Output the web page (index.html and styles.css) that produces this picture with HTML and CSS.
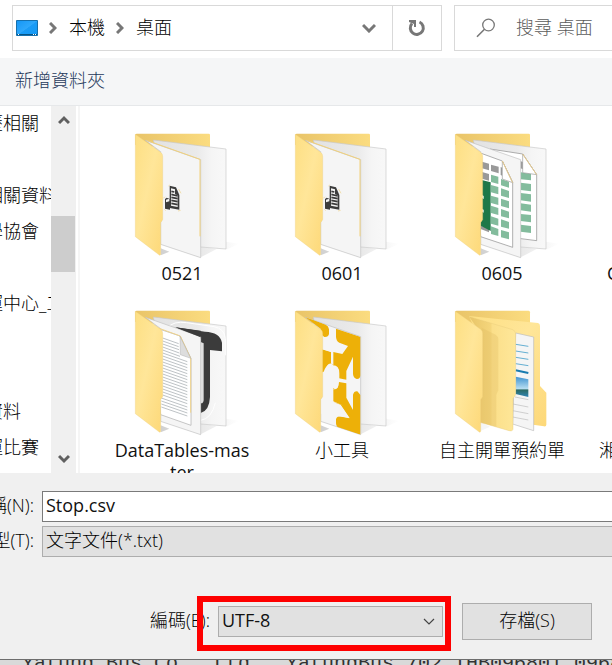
FILE: index.html
```
<!DOCTYPE html>
<html lang="zh-Hant">
<head>
<meta charset="utf-8">
<meta name="viewport" content="width=device-width, initial-scale=1">
<title>另存新檔</title>
<link rel="stylesheet" href="styles.css">
</head>
<body>
<svg class="defs" aria-hidden="true">
  <defs>
    <linearGradient id="back" x1="0" y1="0" x2="1" y2="0"><stop offset="0" stop-color="#e9c468"/><stop offset="1" stop-color="#fbdc80"/></linearGradient>
    <linearGradient id="flap" x1="0" y1="0" x2="1" y2="1"><stop offset="0" stop-color="#fddf83"/><stop offset=".45" stop-color="#ffe699"/><stop offset="1" stop-color="#fdd878"/></linearGradient>
    <linearGradient id="inner" x1="0" y1="0" x2="1" y2="0"><stop offset="0" stop-color="#e8c568"/><stop offset=".45" stop-color="#f4d57b"/><stop offset=".5" stop-color="#fbdf8a"/><stop offset="1" stop-color="#fee799"/></linearGradient>
    <linearGradient id="sheet" x1="0" y1="0" x2="1" y2="0"><stop offset="0" stop-color="#e2e2e2"/><stop offset=".6" stop-color="#eaeaea"/><stop offset=".8" stop-color="#f5f5f5"/><stop offset="1" stop-color="#f8f8f8"/></linearGradient>
    <linearGradient id="shade" x1="0" y1="0" x2="1" y2="0"><stop offset="0" stop-color="#aaa"/><stop offset="1" stop-color="#fff"/></linearGradient>
    <linearGradient id="sky" x1="0" y1="0" x2="0" y2="1"><stop offset="0" stop-color="#3f93d0"/><stop offset=".6" stop-color="#b9dff2"/><stop offset=".65" stop-color="#2b6a63"/><stop offset="1" stop-color="#3185b5"/></linearGradient>
    <linearGradient id="screen" x1="0" y1="0" x2="1" y2="1"><stop offset="0" stop-color="#1496f5"/><stop offset=".5" stop-color="#2fa8fb"/><stop offset=".52" stop-color="#1b9cf6"/><stop offset="1" stop-color="#1499f5"/></linearGradient>
    <clipPath id="front-page"><path d="M76 46 242 104V398L122 358V80Z"/></clipPath>
    <g id="folder-back">
      <path fill="url(#shade)" opacity=".55" d="M318 350 358 356 318 374ZM242 365 290 372 242 397ZM122 370 148 380 122 391Z"/>
      <path fill="url(#back)" d="M46 29Q46 26 50 26H266Q270 26 270 30V80L46 60Z"/>
      <path fill="url(#sheet)" stroke="#c9c9c9" stroke-width="2" d="M100 45 318 72V372L242 366 160 350Z"/>
    </g>
    <path id="sheet-front" fill="#f5f5f5" stroke="#bfbfbf" stroke-width="2" d="M76 46 242 104V398L122 358V80Z"/>
    <path id="folder-flap" fill="url(#flap)" stroke="#eacb78" d="M46 28 122 82Q128 87 128 94V284L122 293V386Q122 394 115 388L46 335Z"/>
    <g id="folder-doc">
      <use href="#folder-back"/><use href="#sheet-front"/>
      <path fill="none" stroke="#f2d17a" stroke-width="3" d="M80 46 240 103V334"/>
      <path fill="#3c3c3c" d="M149 182 168 187 178 210V254L149 249Z"/>
      <path fill="#f5f5f5" d="M153 190 165 193V208L173 211V246L153 242Z"/>
      <path stroke="#3c3c3c" stroke-width="5" d="M154 199 163 201M154 208 173 213M154 217 173 221M154 226 173 230M154 235 173 239"/>
      <path fill="#3c3c3c" d="M135 222 140 218 150 222V254L135 251Z"/><path fill="#f5f5f5" d="M138 224 148 221V229L138 232Z"/>
      <path fill="none" stroke="#efd38d" stroke-width="2" d="M146 184 149 179M176 192 183 205M174 258 182 256M133 253 137 257M130 220 135 215"/>
      <use href="#folder-flap"/>
    </g>
  </defs>
</svg>
<div class="dialog">
  <header class="nav">
    <div class="address">
      <svg class="desktop" viewBox="0 0 22 16" aria-hidden="true"><path fill="url(#screen)" stroke="#1670ad" d="M.5.5h21v15H.5z"/><path fill="#075585" d="M1 14h20v1H1z"/><path fill="#fff" d="M2 14h1v1H2zM17 14h1v1h-1zM19 14h1v1h-1z"/></svg>
      <svg class="sep" viewBox="0 0 8 12" aria-hidden="true"><path d="m1 1 5 5-5 5"/></svg>
      <a class="crumb" href="#">本機</a>
      <svg class="sep" viewBox="0 0 8 12" aria-hidden="true"><path d="m1 1 5 5-5 5"/></svg>
      <a class="crumb" href="#">桌面</a>
      <button class="history" type="button" aria-label="先前的位置"><svg width="14" height="10" viewBox="0 0 14 10"><path fill="none" stroke="#777" stroke-width="3" d="m1 2 6 6 6-6"/></svg></button>
      <button class="refresh" type="button" aria-label="重新整理"><svg width="18" height="18" viewBox="0 0 18 18"><path fill="none" stroke="#777" stroke-width="3" d="M11.500 3A6.500 6.500 0 1 1 4 4.500"/><path fill="#777" d="M1 1h7v7H6V5L1 3z"/></svg></button>
    </div>
    <label class="search">
      <svg width="20" height="20" viewBox="0 0 20 20" aria-hidden="true"><circle cx="12.500" cy="7" r="5.800" fill="none" stroke="#777" stroke-width="1.300"/><path stroke="#777" stroke-width="1.500" d="m8.500 11.200-7.500 7.600"/></svg>
      <input type="search" placeholder="搜尋 桌面" aria-label="搜尋 桌面">
    </label>
  </header>
  <div class="toolbar"><button type="button">新增資料夾</button></div>
  <main class="browser">
    <ul class="tree">
      <li>歷相關</li><li></li><li>相關資料</li><li>學協會</li><li></li><li>運中心_工</li><li></li><li></li><li>資料</li><li>運比賽</li>
    </ul>
    <div class="scrollbar">
      <button type="button" aria-label="向上捲動"><svg width="12" height="10" viewBox="0 0 12 10"><path d="m1 8 5-5 5 5"/></svg></button>
      <div class="track"><div class="thumb"></div></div>
      <button type="button" aria-label="向下捲動"><svg width="12" height="10" viewBox="0 0 12 10"><path d="m1 2 5 5 5-5"/></svg></button>
    </div>
    <div class="files">
      <div class="file"><svg viewBox="6 9 360 402" aria-hidden="true"><use href="#folder-doc"/></svg><span class="latin">0521</span></div>
      <div class="file"><svg viewBox="6 9 360 402" aria-hidden="true"><use href="#folder-doc"/></svg><span class="latin">0601</span></div>
      <div class="file">
        <svg viewBox="6 9 360 402" aria-hidden="true">
          <use href="#folder-back"/>
          <path fill="#fff" stroke="#8a8a8a" stroke-width="2" d="M150 72 248 87 290 149V347L220 338"/>
          <path fill="#999" d="M241 108 250 112V133L241 130Z"/>
          <path fill="#83bc9d" d="M242 142 273 145V166L242 163ZM242 173 273 177V199L242 195ZM242 204 273 208V230L242 226ZM242 235 273 239V260L242 256ZM242 267 273 270V292L242 288ZM242 299 273 303V324L242 320Z"/>
          <path fill="#fff" stroke="#999" stroke-width="2" d="M248 87V143L290 149Z"/><path stroke="#e6ca8d" stroke-width="3" d="m248 87 42 62"/>
          <use href="#sheet-front"/>
          <path fill="#fff" stroke="#8a8a8a" stroke-width="2" d="M110 80 187 108 218 172V367L122 335Z"/>
          <path fill="#999" d="M126 110 147 116V136L126 130ZM153 119 176 125V145L153 138ZM182 126 187 128V152L182 150ZM126 141 147 147V167L126 161ZM122 302 147 310V322L122 312Z"/>
          <path fill="#1d7848" d="M122 164 152 172V318L122 302Z"/>
          <path fill="#fff" d="M126 210 131 213V222L126 219ZM126 252 131 254V263L126 260Z"/>
          <path fill="#83bc9d" d="M153 149 175 155V177L153 171ZM183 162 207 170V188L183 181ZM153 180 175 186V208L153 202ZM183 190 207 198V219L183 212ZM153 212 175 218V240L153 234ZM183 221 207 229V250L183 243ZM153 242 175 249V270L153 264ZM183 252 207 260V280L183 274ZM153 274 175 281V302L153 296ZM183 283 207 291V311L183 305ZM153 304 175 312V333L153 327ZM183 315 207 322V343L183 337Z"/>
          <path fill="#fff" stroke="#999" stroke-width="2" d="M187 108V162L218 173Z"/><path stroke="#e6ca8d" stroke-width="3" d="m187 108 31 65"/>
          <use href="#folder-flap"/>
        </svg><span class="latin">0605</span>
      </div>
      <div class="file file-edge file-next"><span class="latin">C</span></div>
      <div class="file">
        <svg viewBox="6 9 360 402" aria-hidden="true">
          <use href="#folder-back"/>
          <path fill="none" stroke="#fff" stroke-width="3" d="M142 78Q160 56 200 62L282 74Q314 80 316 110V160M242 355Q275 350 286 302"/>
          <path fill="#3b3b3b" d="M166 76 255 89Q300 91 306 122V148L270 144V285Q268 326 242 333V110Z"/>
          <use href="#sheet-front"/>
          <path fill="#dedede" d="M242 120 251 124V294Q250 305 242 304Z"/>
          <path fill="#3b3b3b" d="M166 76 242 86V106Z"/>
          <path fill="#fff" stroke="#aaa" stroke-width="2" d="M105 77 180 102 213 169V370L122 338Z"/>
          <path fill="none" stroke="#f0d38b" stroke-width="3" d="M115 78 181 102 212 169V332"/>
          <path stroke="#9ca3a8" stroke-width="2" d="m128 108 48 17M128 117l48 17M128 126l49 17M128 135l50 18M128 144l52 19M128 153l74 26M128 162l74 26M128 171l74 26M128 180l74 26M128 189l74 26M128 198l74 26M128 207l74 26M128 216l74 26M128 225l74 26M128 234l74 26M128 243l74 26M128 252l74 26M128 261l74 26M128 270l74 26M128 279l74 26M124 288l78 27M124 297l78 27M124 306l78 27M124 315l78 27"/>
          <path fill="#ddd" stroke="#999" d="M180 103 181 158 212 169Z"/>
          <use href="#folder-flap"/>
        </svg><span class="latin">DataTables-mas<br>ter</span>
      </div>
      <div class="file">
        <svg viewBox="6 9 360 402" aria-hidden="true">
          <use href="#folder-back"/><use href="#sheet-front"/>
          <g clip-path="url(#front-page)">
            <path fill="#edb008" d="M76 44 137 68Q146 72 147 82V96Q145 106 133 105L76 60ZM168 80 242 105V220Q240 232 230 231Q220 228 219 216V164L199 207V233L177 229V258Q173 267 159 261V299L180 307L219 324V278Q222 267 232 268L242 280V399L178 379Q167 374 168 360V352Q170 342 183 343L208 349L181 309L159 299V188L156 185Q140 180 136 208L122 212V140L153 149V184L160 190V150L187 156L204 132L178 122Q167 117 168 100Z"/>
            <path fill="#f5f5f5" d="M130 212Q139 181 159 190 178 190 178 214V250Q170 268 160 258V303L182 308 209 348 122 335V216Z"/>
            <path fill="#edb008" d="M160 262Q176 266 177 240L199 244V287L219 324V347L185 309 160 298Z"/>
            <path fill="none" stroke="#f5f5f5" stroke-width="4" d="M122 138 155 149V184M176 234 219 244"/>
          </g>
          <use href="#folder-flap"/>
        </svg><span>小工具</span>
      </div>
      <div class="file">
        <svg viewBox="6 9 360 402" aria-hidden="true">
          <path fill="url(#back)" d="M46 29Q46 26 50 26H266Q270 26 270 31V80L46 60Z"/>
          <path fill="url(#flap)" d="M87 42 294 63Q300 64 300 72V252L319 272V368Q319 374 312 373L220 360Z"/>
          <path fill="#f5f5f5" stroke="#bbb" stroke-width="2" d="M227 93 281 105V386L218 366Z"/>
          <path stroke="#65afd2" stroke-width="3" d="m227 127 38 6M227 147l38 6M227 166l38 6M227 185l38 6"/>
          <path stroke="#187bb0" stroke-width="6" d="m227 205 38 8"/>
          <path fill="url(#sky)" d="M227 224 265 232V285L227 276Z"/>
          <path stroke="#bbb" stroke-width="2" d="m225 285 40 8M219 306l46 9M218 326l47 9M218 345l47 9"/>
          <path fill="#f5f5f5" d="M120 360 150 374 120 388Z"/>
          <path fill="url(#inner)" stroke="#e4c675" d="M88 44 218 83Q227 87 227 96V278L219 290V382Q217 390 207 386L120 361V90Z"/>
          <path fill="#dfbb60" opacity=".3" d="M125 77 167 98Q175 103 175 112V265L169 278V374L122 362Z"/>
          <use href="#folder-flap"/>
        </svg><span>自主開單預約單</span>
      </div>
      <div class="file file-edge"><span>湘</span></div>
    </div>
  </main>
  <form class="form">
    <div class="field"><label for="name"><span>稱(N):</span></label><input class="latin" id="name" type="text" value="Stop.csv"></div>
    <div class="field"><label for="type"><span>型(T):</span></label><select id="type"><option>文字文件(*.txt)</option></select></div>
    <div class="actions">
      <label for="encoding">編碼(E):</label>
      <div class="encoding">
        <select class="latin" id="encoding"><option>UTF-8</option></select>
        <svg class="caret" viewBox="0 0 12 8" aria-hidden="true"><path d="m1 1 5 5 5-5"/></svg>
        <div class="marker"></div>
      </div>
      <button class="save" type="button">存檔(S)</button>
    </div>
  </form>
</div>
<div class="editor">Yatung Bus Co., Ltd., YatungBus,702,THB096801,0968</div>
</body>
</html>
```
FILE: styles.css
```
* { box-sizing: border-box; }
body {
  margin: 0;
  min-height: 100vh;
  display: flex;
  flex-direction: column;
  overflow: hidden;
  background: #fff;
  color: #000;
  font: 300 18px/24px "Open Sans", "Noto Sans CJK TC", sans-serif;
}
button, input, select { font: inherit; color: inherit; border: 0; border-radius: 0; padding: 0; margin: 0; background: none; }
.latin { font-weight: 400; color: #111; }
.defs { position: absolute; width: 0; height: 0; }
.dialog { flex: 1; display: flex; flex-direction: column; border-bottom: 1px solid #6d6d6d; }

.nav { display: flex; gap: 12px; padding: 5px 0 7px 12px; }
.address { flex: 0 0 430px; height: 46px; display: flex; align-items: center; border: 1px solid #d9d9d9; padding-left: 3px; }
.desktop { width: 22px; height: 16px; margin-right: 11px; }
.sep { width: 8px; height: 12px; margin-right: 12px; }
.sep path { fill: none; stroke: #777; stroke-width: 3; }
.crumb { color: inherit; text-decoration: none; margin-right: 11px; padding-bottom: 3px; }
.history { margin-left: auto; width: 46px; height: 100%; display: grid; place-items: center; }
.refresh { width: 49px; height: 100%; display: grid; place-items: center; border-left: 1px solid #d9d9d9; }
.search { flex: 1; min-width: 0; height: 46px; display: flex; align-items: center; gap: 20px; border: 1px solid #d9d9d9; border-right: 0; padding-left: 21px; }
.search svg { flex: none; }
.search input { flex: 1; min-width: 0; padding-bottom: 3px; outline: 0; appearance: none; }
.search input::placeholder { color: #5c5c5c; opacity: 1; }

.toolbar { height: 48px; padding: 0 15px 3px; display: flex; align-items: center; background: #f5f6f7; border-bottom: 1px solid #e6e8ea; }
.toolbar button { color: #1e395b; }

.browser { flex: 1; min-height: 0; height: 367px; display: flex; }
.tree { flex: 0 0 51px; min-width: 0; margin: 0; padding: 0; overflow: hidden; list-style: none; white-space: nowrap; }
.tree li { height: 36px; line-height: 34px; margin-left: -15px; }
.scrollbar { flex: 0 0 25px; display: flex; flex-direction: column; background: #f0f0f0; }
.scrollbar button { height: 28px; display: grid; place-items: center; }
.scrollbar path { fill: none; stroke: #606060; stroke-width: 3; }
.track { flex: 1; padding-top: 82px; }
.thumb { height: 56px; margin-right: 1px; background: #cdcdcd; }
.files {
  flex: 1;
  min-width: 0;
  height: 367px;
  margin-left: 2px;
  padding: 22px 0 0 22px;
  border-left: 2px solid #f5f5f5;
  display: grid;
  grid-template-columns: repeat(3, 160px) 1fr;
  grid-auto-rows: 177px;
  overflow: hidden;
}
.file { min-width: 0; display: flex; flex-direction: column; align-items: center; line-height: 22px; }
.file svg { flex: none; width: 120px; height: 134px; }
.file span { width: 140px; text-align: center; white-space: nowrap; }
.file-edge { padding: 134px 0 0 17px; align-items: flex-start; }
.file-edge span { text-align: left; }
.file-next { padding-left: 25px; }

.form { padding: 18px 0 8px; background: #f0f0f0; }
.field { display: flex; align-items: center; margin-bottom: 4px; }
.field label { flex: 0 0 34px; margin-right: 8px; padding-bottom: 3px; display: flex; justify-content: flex-end; overflow: hidden; white-space: nowrap; }
.field input, .field select { flex: 1; min-width: 0; height: 31px; padding: 0 3px 3px; border: 1px solid #7a7a7a; border-right: 0; background: #fff; outline: 0; appearance: none; }
.field select { border-color: #adadad; background: #e1e1e1; }
.actions { display: flex; align-items: center; justify-content: flex-end; padding: 42px 20px 11px 0; }
.actions label { margin-right: 8px; padding-bottom: 3px; }
.encoding { position: relative; flex: 0 0 225px; margin-right: 19px; }
.encoding select { display: block; width: 100%; height: 31px; padding: 0 3px 3px; border: 1px solid #adadad; background: #e1e1e1; appearance: none; outline: 0; }
.caret { position: absolute; right: 8px; top: 12px; width: 12px; height: 8px; pointer-events: none; }
.caret path { fill: none; stroke: #444; stroke-width: 1.2; }
.marker { position: absolute; inset: -10px -8px -14px -21px; border: 6px solid #fe0000; pointer-events: none; }
.save { flex: 0 0 130px; height: 37px; padding-bottom: 3px; border: 1px solid #adadad; background: #e1e1e1; }
.editor { height: 6px; padding-left: 22px; overflow: hidden; white-space: nowrap; background: #d9d9d9; font: 400 20px/8px "Liberation Mono", monospace; color: #333; }
```
